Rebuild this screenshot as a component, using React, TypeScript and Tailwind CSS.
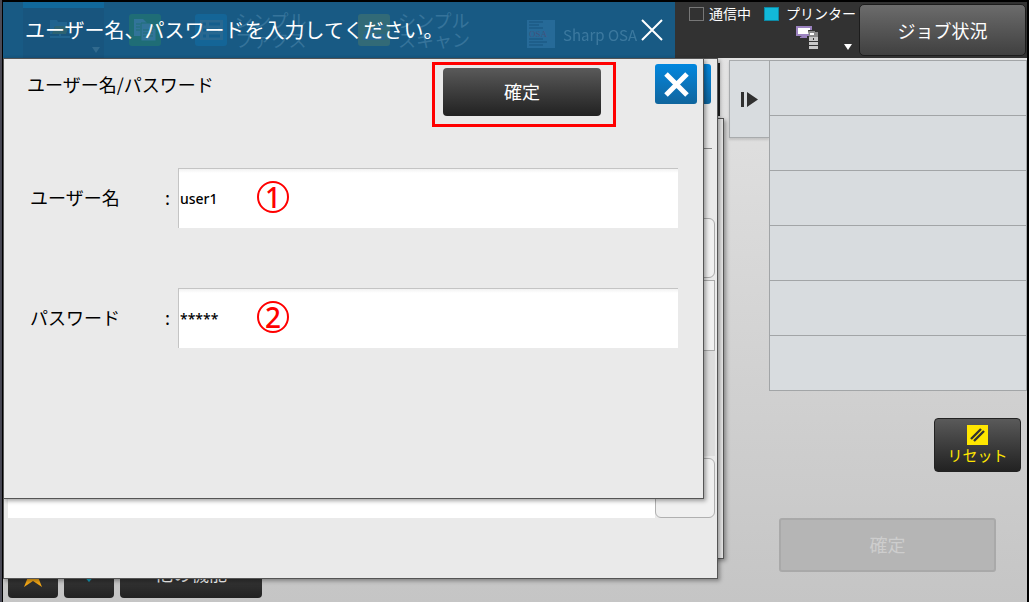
import { ReactNode } from "react";

interface FieldProps {
  id: string;
  label: string;
  value: string;
  step: string;
}

const darkButton =
  "rounded-[4px] bg-gradient-to-b from-[#5a5a5a] to-[#222222] text-white";

const jobs = ["job-1", "job-2", "job-3", "job-4", "job-5", "job-6"];

const Cross = () => (
  <svg width="42" height="40" viewBox="0 0 42 40" aria-hidden="true">
    <path d="M11 10 L32 31 M32 10 L11 31" stroke="#fff" strokeWidth="5" />
  </svg>
);

const CloseButton = () => (
  <button
    type="button"
    aria-label="close"
    className="h-10 w-[42px] shrink-0 rounded-[3px] bg-gradient-to-b from-[#0087df] to-[#0f659d]"
  >
    <Cross />
  </button>
);

const Field = (props: FieldProps) => {
  const { id, label, value, step } = props;

  return (
    <div className="flex h-[60px] items-center">
      <label htmlFor={id} className="flex w-[148px] shrink-0 justify-between pb-[2px] text-lg">
        <span>{label}</span>
        <span className="pr-2">:</span>
      </label>
      <div className="relative flex-1">
        <input
          id={id}
          type="text"
          defaultValue={value}
          className="h-[60px] w-full border-t border-l border-[#c4c4c4] bg-gradient-to-b from-[#f2f2f2] to-white to-[4px] pl-px font-['Noto_Sans'] text-sm font-medium text-black"
        />
        <span className="absolute top-[13px] left-[79px] flex size-8 items-center justify-center rounded-full border-2 border-[#ff0000] font-['Noto_Sans'] text-[28px] leading-none font-medium text-[#ff0000]">
          {step}
        </span>
      </div>
    </div>
  );
};

const FolderIcon = () => (
  <svg width="20" height="19" viewBox="0 0 20 19" aria-hidden="true">
    <path d="M0 0 h7 l1 2 h9 v4 h-12 l-3 8 H0z" fill="#3f94c4" />
    <path d="M5 6 h14 l-3 8 H2z" fill="#6e8d50" />
    <path d="M0 17 h20 M10 14 v4 M8 17 h4" stroke="#3f94c4" strokeWidth="2" />
  </svg>
);

const CopyIcon = () => (
  <svg width="32" height="32" viewBox="0 0 32 32" aria-hidden="true">
    <rect width="32" height="32" rx="3" fill="#2f9a58" />
    <path d="M5 5 h9 l4 4 v13 H5z" fill="#6fb2c9" />
    <path d="M12 9 h10 l5 5 v13 H12z" fill="#6fb2c9" stroke="#2f9a58" />
    <path d="M22 9 v5 h5" stroke="#2f9a58" fill="none" />
    <path d="M7 10h4M7 13h4M7 16h4M14 16h10M14 19h10M14 22h10" stroke="#2f9a58" />
  </svg>
);

const ListIcon = () => (
  <svg width="32" height="32" viewBox="0 0 32 32" aria-hidden="true">
    <rect width="32" height="32" rx="3" fill="#0a86d0" />
    <path d="M5 6 h23 v20 H5z" fill="#5a92b8" />
    <path d="M8 10h3M8 16h3M8 22h3M14 10h11M14 16h9M14 22h11" stroke="#0a6aa8" strokeWidth="3" />
  </svg>
);

const ScanIcon = () => (
  <svg width="32" height="32" viewBox="0 0 32 32" aria-hidden="true">
    <rect width="32" height="32" rx="3" fill="#7f9a52" />
    <path d="M5 18 L26 10 v4 L9 20z M5 20 h22 v6 H5z" fill="#5d93b0" />
  </svg>
);

const OsaIcon = () => (
  <svg width="28" height="28" viewBox="0 0 28 28" aria-hidden="true">
    <rect width="28" height="28" fill="#4b8fca" />
    <path d="M2 2h14M2 5h10M2 8h14M2 19h14M2 22h18M2 25h14" stroke="#16436b" />
    <text x="2" y="17" fontSize="9" fill="#a04468" fontFamily="Liberation Serif">
      OSA
    </text>
  </svg>
);

const ModeTab = (props: { icon: ReactNode; children?: ReactNode }) => (
  <div className="flex items-center gap-2">
    {props.icon}
    {props.children}
  </div>
);

const TitleBar = () => (
  <div className="relative flex flex-1 items-center justify-between bg-[#185a84] pr-3 pl-[22px]">
    <div className="absolute inset-0 flex overflow-hidden pl-5 whitespace-nowrap" aria-hidden="true">
      <div className="relative flex w-[81px] shrink-0 justify-center border-t-[6px] border-[#11689b] bg-[#18557e] pt-3 pr-2">
        <span className="opacity-25">
          <FolderIcon />
        </span>
        <span className="absolute right-1 bottom-[5px] border-x-4 border-t-[6px] border-x-transparent border-t-[#316a8e]" />
      </div>
      <div className="flex items-center pl-[25px] text-lg leading-[19px] text-[#8fc0de]">
        <div className="w-[66px] opacity-30">
          <ModeTab icon={<CopyIcon />} />
        </div>
        <div className="w-[163px] opacity-25">
          <ModeTab icon={<ListIcon />}>
            <span>
              シンプル
              <br />
              ファクス
            </span>
          </ModeTab>
        </div>
        <div className="w-[169px] opacity-25">
          <ModeTab icon={<ScanIcon />}>
            <span>
              シンプル
              <br />
              スキャン
            </span>
          </ModeTab>
        </div>
        <div className="pt-2 text-[15px] opacity-30">
          <ModeTab icon={<OsaIcon />}>Sharp OSA</ModeTab>
        </div>
      </div>
    </div>
    <h1 className="relative text-xl whitespace-nowrap text-white">
      ユーザー名、パスワードを入力してください。
    </h1>
    <button aria-label="cancel" className="relative">
      <svg width="22" height="22" viewBox="0 0 22 22" aria-hidden="true">
        <path d="M1 1 L21 21 M21 1 L1 21" stroke="#fff" strokeWidth="2" />
      </svg>
    </button>
  </div>
);

const PrinterIcon = () => (
  <svg width="22" height="24" viewBox="0 0 22 24" aria-hidden="true">
    <rect x="1" y="1" width="14" height="8" fill="#fff" stroke="#9c83c0" strokeWidth="2" />
    <path d="M6 10 h5 v2 H4 v-1z" fill="#9c83c0" />
    <path d="M12 4 h7 v2 h3 v17 h-9 V9z" fill="#343434" />
    <path d="M13 5 h6 v1 h3 v5 h-9z" fill="#8b8b8b" />
    <path d="M14 7 h4 v2 h-4z" fill="#fff" />
    <path d="M13 11 h9 v4 h-9z M13 16 h9 v3 h-9z M13 20 h9 v3 h-9z" fill="#c8c8c8" />
    <path d="M17 12 h1 v2 h-1z" fill="#333" />
  </svg>
);

const StatusArea = () => (
  <div className="flex w-[184px] shrink-0 flex-col bg-[#323232] pl-[14px] text-sm text-white">
    <div className="flex h-6 items-center whitespace-nowrap">
      <span className="h-[14px] w-[15px] border border-[#777777]" />
      <span className="w-[60px] pb-[2px] pl-[5px]">通信中</span>
      <span className="h-[14px] w-[15px] border border-[#0d8aa6] bg-[#12b8d8]" />
      <span className="pb-[2px] pl-[7px]">プリンター</span>
    </div>
    <div className="flex justify-end gap-[26px] pr-[7px]">
      <PrinterIcon />
      <span className="self-end border-x-4 border-t-[6px] border-x-transparent border-t-white" />
    </div>
  </div>
);

const BackWindow = () => (
  <div className="absolute top-[60px] right-[5px] left-0 h-[441px] border border-[#555555] bg-[#e9e9e9] shadow-[2px_2px_4px_rgba(0,0,0,0.35)]" />
);

const SettingsWindow = () => (
  <div className="absolute top-0 right-[11px] left-0 flex flex-col items-end border border-[#555555] bg-[#eaeaea] pb-[60px] shadow-[2px_2px_4px_rgba(0,0,0,0.35)]">
    <div className="w-full pr-[5px]">
      <div className="flex h-[90px] justify-end border-b border-[#888888] pt-[5px] pr-px">
        <CloseButton />
      </div>
    </div>
    <div className="mt-[69px] mr-[2px] h-[60px] w-[60px] rounded-md border border-[#aaaaaa] bg-[#f0f0f0]" />
    <div className="mt-[2px] mr-[2px] h-[71px] w-[60px] border border-[#aaaaaa] bg-[#f0f0f0]" />
    <div className="mr-[2px] h-[105px] w-[60px] bg-[#dddddd]" />
    <div className="flex w-full pt-[2px] pr-[2px] pl-1">
      <div className="flex-1 bg-white" />
      <div className="h-[60px] w-[60px] rounded-md border border-[#b0b0b0] bg-[#f0f0f0]" />
    </div>
  </div>
);

const LoginWindow = () => (
  <form className="absolute top-0 right-[25px] left-0 border border-[#555555] bg-[#eaeaea] pr-[25px] pb-[150px] pl-[26px] text-black shadow-[2px_2px_4px_rgba(0,0,0,0.35)]">
    <div className="-mr-[19px] -ml-[3px] flex items-start pt-[3px]">
      <h2 className="flex-1 pt-2 text-lg whitespace-nowrap">ユーザー名/パスワード</h2>
      <div className="mr-[39px] border-3 border-[#ff0000] pt-[3px] pr-3 pb-2 pl-2">
        <button type="button" className={`${darkButton} h-12 w-[158px] pb-[2px] text-lg`}>
          確定
        </button>
      </div>
      <div className="pt-[2px]">
        <CloseButton />
      </div>
    </div>
    <div className="flex flex-col gap-[60px] pt-[41px]">
      <Field id="user" label="ユーザー名" value="user1" step="1" />
      <Field id="password" label="パスワード" value="*****" step="2" />
    </div>
  </form>
);

const Toolbar = () => (
  <div className="flex gap-[6px] pb-1 pl-[5px]">
    <button aria-label="favorite" className={`${darkButton} flex h-[54px] w-[50px] items-center justify-center pt-2`}>
      <svg width="26" height="26" viewBox="0 0 26 26" aria-hidden="true">
        <path d="M13 1 L16 10 H25 L18 15 L22 25 L13 19 L4 25 L8 15 L1 10 H10z" fill="#f5a816" />
      </svg>
    </button>
    <button aria-label="down" className={`${darkButton} flex h-[54px] w-[50px] items-center justify-center`}>
      <svg width="24" height="24" viewBox="0 0 24 24" aria-hidden="true">
        <path d="M8 2 h8 v11 h5 L12 23 L3 13 h5z" fill="#14a6c6" />
      </svg>
    </button>
    <button className={`${darkButton} h-[54px] w-[142px] pt-1 text-lg`}>他の機能</button>
  </div>
);

const SidePanel = () => (
  <aside className="flex w-[298px] shrink-0 items-start pt-[2px]">
    <button
      aria-label="collapse"
      className="flex h-[78px] w-10 items-center justify-center border border-r-0 border-[#a8abad] bg-[#d8dcdf] shadow-[0_2px_2px_rgba(0,0,0,0.12)]"
    >
      <svg width="17" height="15" viewBox="0 0 17 15" aria-hidden="true">
        <path d="M0 0 h3 v15 h-3z M6 0 L17 7.5 L6 15z" fill="#303030" />
      </svg>
    </button>
    <div className="flex flex-1 flex-col">
      <ul className="border border-b-0 border-[#a2a5a7] bg-[#d8dcdf]">
        {jobs.map((job) => (
          <li key={job} className="h-[55px] border-b border-[#a2a5a7]" />
        ))}
      </ul>
      <button
        className={`${darkButton} mt-[27px] mr-[6px] flex h-[54px] w-[87px] flex-col items-center self-end border border-[#222222] pt-[6px] text-[15px] leading-5`}
      >
        <svg width="21" height="20" viewBox="0 0 21 20" className="shrink-0" aria-hidden="true">
          <rect width="21" height="20" fill="#ffe600" />
          <path d="M4 14 L14 4 M7 16 L17 6" stroke="#333" strokeWidth="2.4" />
        </svg>
        <span className="text-[#ffe600]">リセット</span>
      </button>
      <button
        disabled
        className="mt-[46px] mr-[31px] ml-[10px] h-[54px] rounded-[3px] border-2 border-[#a9a9a9] bg-[#b5b5b5] pb-[2px] text-lg text-[#cdcdcd]"
      >
        確定
      </button>
    </div>
  </aside>
);

export default function App() {
  return (
    <div className="flex min-h-screen border-l-2 border-[#4b4b57] font-['Noto_Sans_CJK_JP',sans-serif] font-normal">
      <div className="flex flex-1 flex-col border-t-2 border-r-2 border-l border-black bg-gradient-to-b from-[#e6e6e6] to-[#c5c5c5]">
        <header className="flex h-14">
          <TitleBar />
          <StatusArea />
          <div className="w-[168px] shrink-0 bg-[#323232] pt-[2px] pr-px">
            <button className="h-[52px] w-full rounded-[5px] border border-[#1c1c1c] bg-gradient-to-b from-[#6c6c6c] to-[#404040] text-lg text-white">
              ジョブ状況
            </button>
          </div>
        </header>
        <div className="flex flex-1">
          <main className="relative flex flex-1 flex-col justify-between">
            <div className="mt-[5px] mr-[9px] h-[53px] w-[60px] self-end bg-[#222222]" />
            <Toolbar />
            <BackWindow />
            <SettingsWindow />
            <LoginWindow />
          </main>
          <SidePanel />
        </div>
      </div>
    </div>
  );
}
